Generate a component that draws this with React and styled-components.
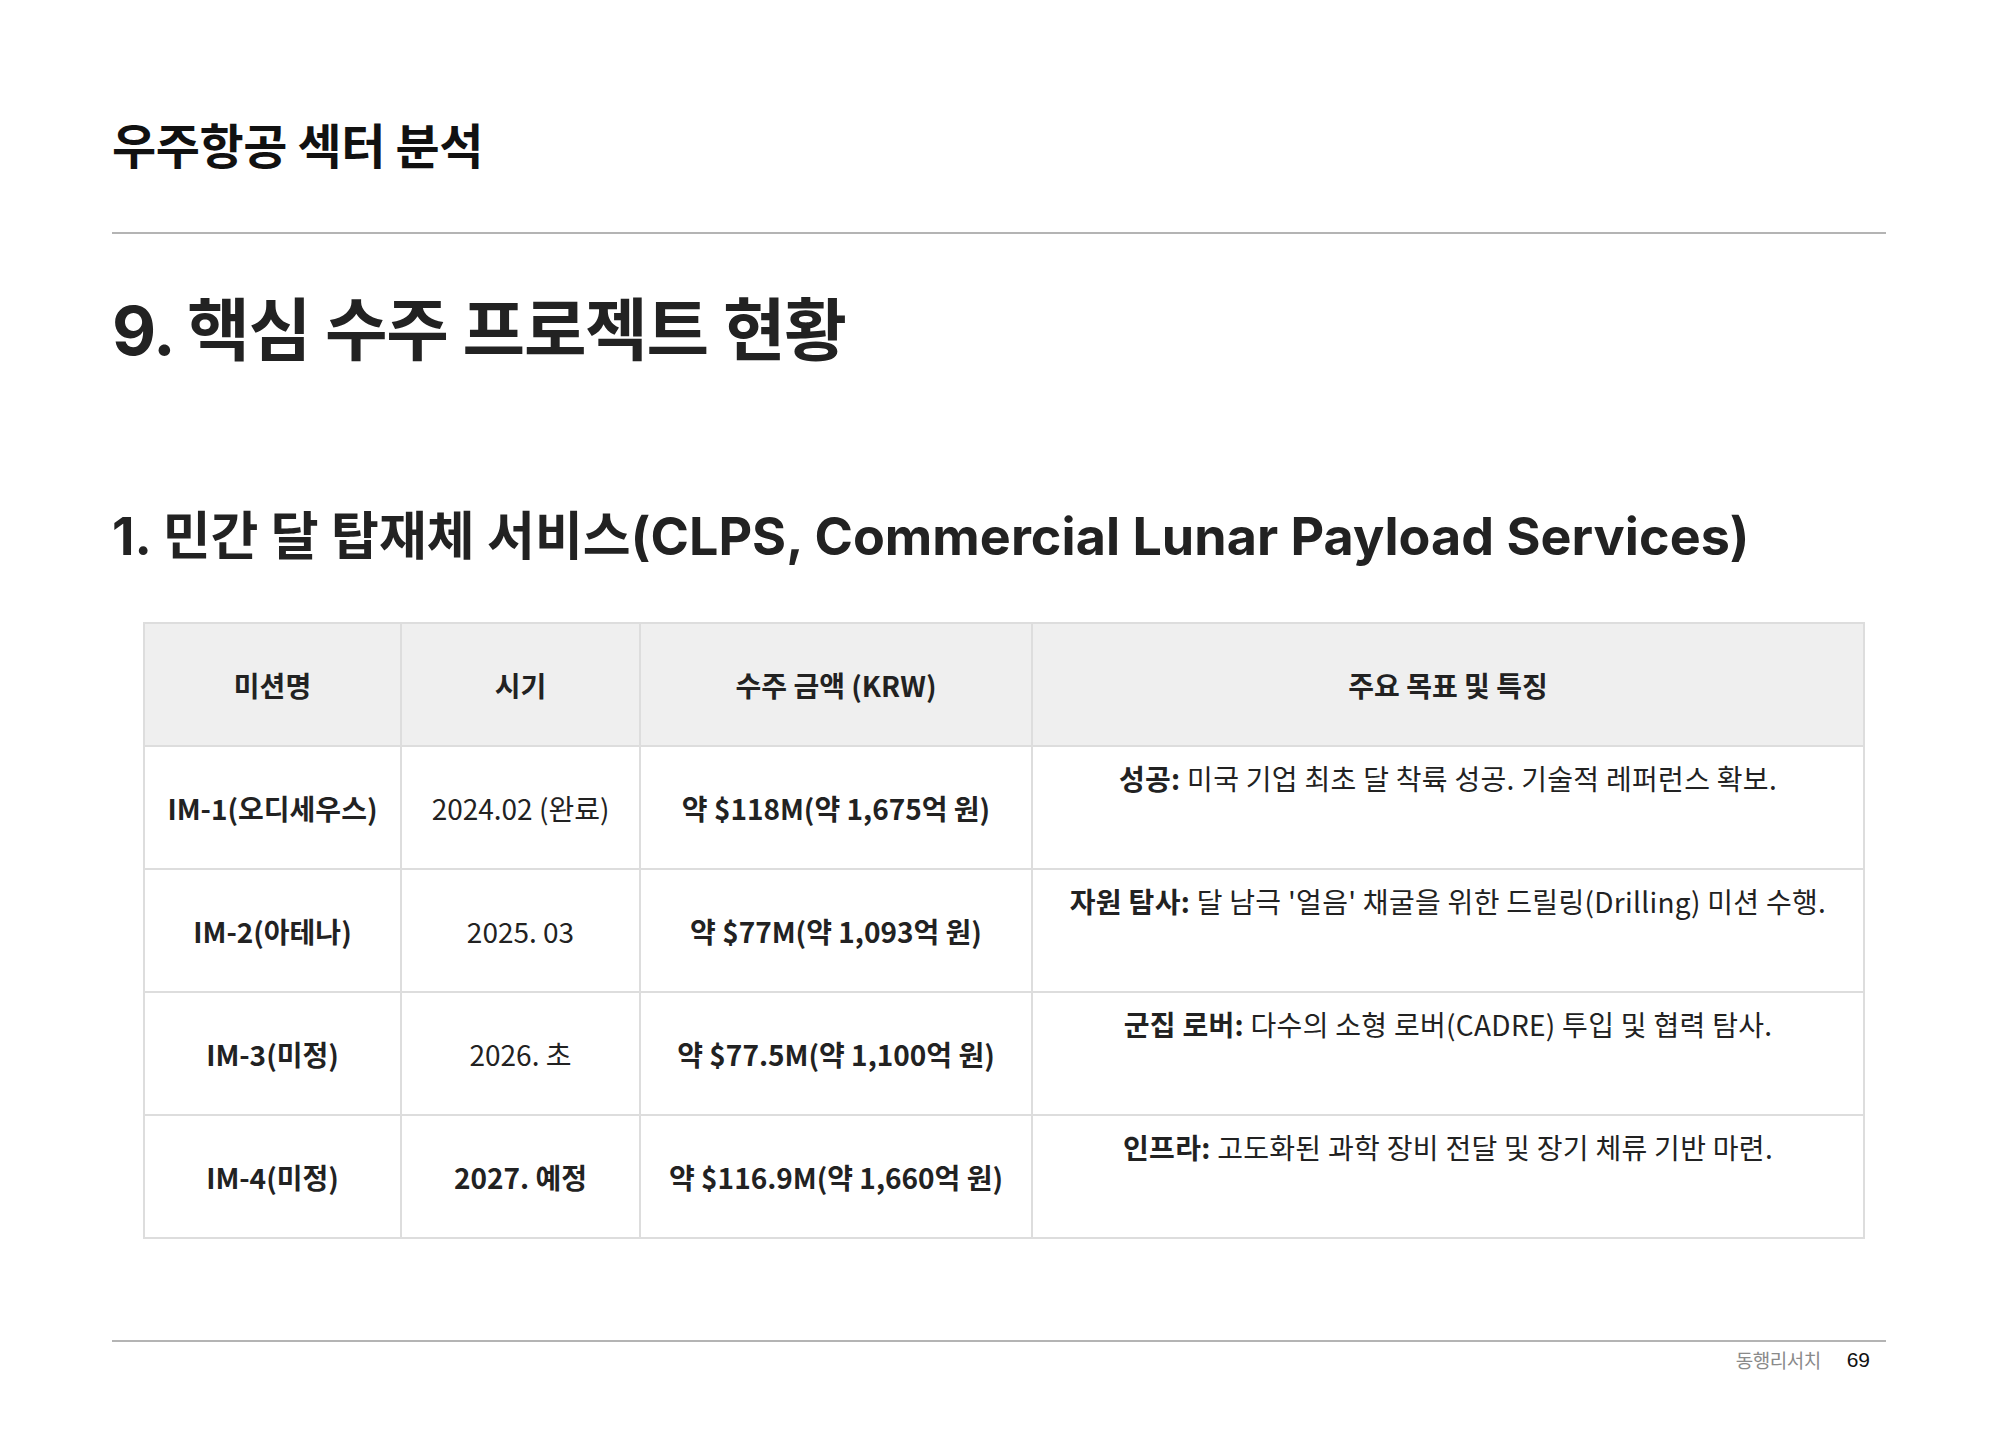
import React from "react";
import styled, { createGlobalStyle } from "styled-components";

const GlobalStyle = createGlobalStyle`
  html, body {
    margin: 0;
    padding: 0;
    background: #ffffff;
  }
  body {
    font-family: "Noto Sans CJK KR", "Noto Sans", sans-serif;
    color: #222222;
  }
`;

const Page = styled.div`
  width: 2000px;
  height: 1438px;
  box-sizing: border-box;
  padding: 114px 114px 0 112px;
  display: flex;
  flex-direction: column;
`;

const SectorTitle = styled.div`
  font-family: "Noto Sans CJK KR", sans-serif;
  font-size: 48px;
  line-height: 58px;
  font-weight: 700;
  letter-spacing: -0.4px;
  color: #111111;
`;

const Divider = styled.div`
  height: 2px;
  background: #b4b4b4;
  margin-top: ${(p) => p.$gap}px;
`;

const PageHeading = styled.h1`
  margin: 56px 0 0;
  font-family: Inter, "Noto Sans CJK KR", sans-serif;
  font-size: 68px;
  line-height: 80px;
  font-weight: 700;
  letter-spacing: -1.2px;
  color: #222222;
`;

const SectionHeading = styled.h2`
  margin: 137px 0 0;
  font-family: Inter, "Noto Sans CJK KR", sans-serif;
  font-size: 52px;
  line-height: 60px;
  font-weight: 700;
  letter-spacing: 0.05px;
  color: #222222;
`;

const Table = styled.table`
  margin: 55px 0 0 31px;
  width: 1722px;
  border-collapse: collapse;
  table-layout: fixed;
  border: 2px solid #dddddd;
  font-family: "Noto Sans CJK KR", sans-serif;
  font-size: 28px;
  color: #222222;
`;

const Row = styled.tr`
  height: 123px;
`;

const Th = styled.th`
  background: #efefef;
  border: 2px solid #dddddd;
  font-weight: 700;
  text-align: center;
  vertical-align: middle;
  padding: 0 12px;
`;

const Td = styled.td`
  border: 2px solid #dddddd;
  text-align: center;
  vertical-align: ${(p) => (p.$top ? "top" : "middle")};
  padding: ${(p) => (p.$top ? "11px 12px 0" : "0 12px")};
  line-height: 40px;
  letter-spacing: ${(p) => (p.$top ? "0.3px" : "0")};
  font-weight: ${(p) => (p.$bold ? 700 : 400)};
`;

const Label = styled.strong`
  font-weight: 700;
`;

const Footer = styled.div`
  margin-top: 101px;
  display: flex;
  flex-direction: column;
`;

const FooterMeta = styled.div`
  display: flex;
  justify-content: flex-end;
  align-items: center;
  gap: 26px;
  padding: 4px 16px 0 0;
`;

const Brand = styled.span`
  font-family: "Noto Sans CJK KR", sans-serif;
  font-size: 19px;
  color: #8a8a8a;
  letter-spacing: -0.5px;
`;

const PageNo = styled.span`
  font-family: "Liberation Sans", Arial, sans-serif;
  font-size: 21px;
  color: #111111;
`;

const missions = [
  {
    name: "IM-1(오디세우스)",
    when: "2024.02 (완료)",
    amount: "약 $118M(약 1,675억 원)",
    label: "성공:",
    text: " 미국 기업 최초 달 착륙 성공. 기술적 레퍼런스 확보.",
  },
  {
    name: "IM-2(아테나)",
    when: "2025. 03",
    amount: "약 $77M(약 1,093억 원)",
    label: "자원 탐사:",
    text: " 달 남극 '얼음' 채굴을 위한 드릴링(Drilling) 미션 수행.",
  },
  {
    name: "IM-3(미정)",
    when: "2026. 초",
    amount: "약 $77.5M(약 1,100억 원)",
    label: "군집 로버:",
    text: " 다수의 소형 로버(CADRE) 투입 및 협력 탐사.",
  },
  {
    name: "IM-4(미정)",
    when: "2027. 예정",
    whenBold: true,
    amount: "약 $116.9M(약 1,660억 원)",
    label: "인프라:",
    text: " 고도화된 과학 장비 전달 및 장기 체류 기반 마련.",
  },
];

export default function App() {
  return (
    <>
      <GlobalStyle />
      <Page>
        <SectorTitle>우주항공 섹터 분석</SectorTitle>
        <Divider $gap={60} />
        <PageHeading>9. 핵심 수주 프로젝트 현황</PageHeading>
        <SectionHeading>
          1. 민간 달 탑재체 서비스(CLPS, Commercial Lunar Payload Services)
        </SectionHeading>
        <Table>
          <colgroup>
            <col style={{ width: "257px" }} />
            <col style={{ width: "239px" }} />
            <col style={{ width: "392px" }} />
            <col />
          </colgroup>
          <thead>
            <Row>
              <Th>미션명</Th>
              <Th>시기</Th>
              <Th>수주 금액 (KRW)</Th>
              <Th>주요 목표 및 특징</Th>
            </Row>
          </thead>
          <tbody>
            {missions.map((m) => (
              <Row key={m.name}>
                <Td $bold>{m.name}</Td>
                <Td $bold={m.whenBold}>{m.when}</Td>
                <Td $bold>{m.amount}</Td>
                <Td $top>
                  <Label>{m.label}</Label>
                  {m.text}
                </Td>
              </Row>
            ))}
          </tbody>
        </Table>
        <Footer>
          <Divider $gap={0} />
          <FooterMeta>
            <Brand>동행리서치</Brand>
            <PageNo>69</PageNo>
          </FooterMeta>
        </Footer>
      </Page>
    </>
  );
}
